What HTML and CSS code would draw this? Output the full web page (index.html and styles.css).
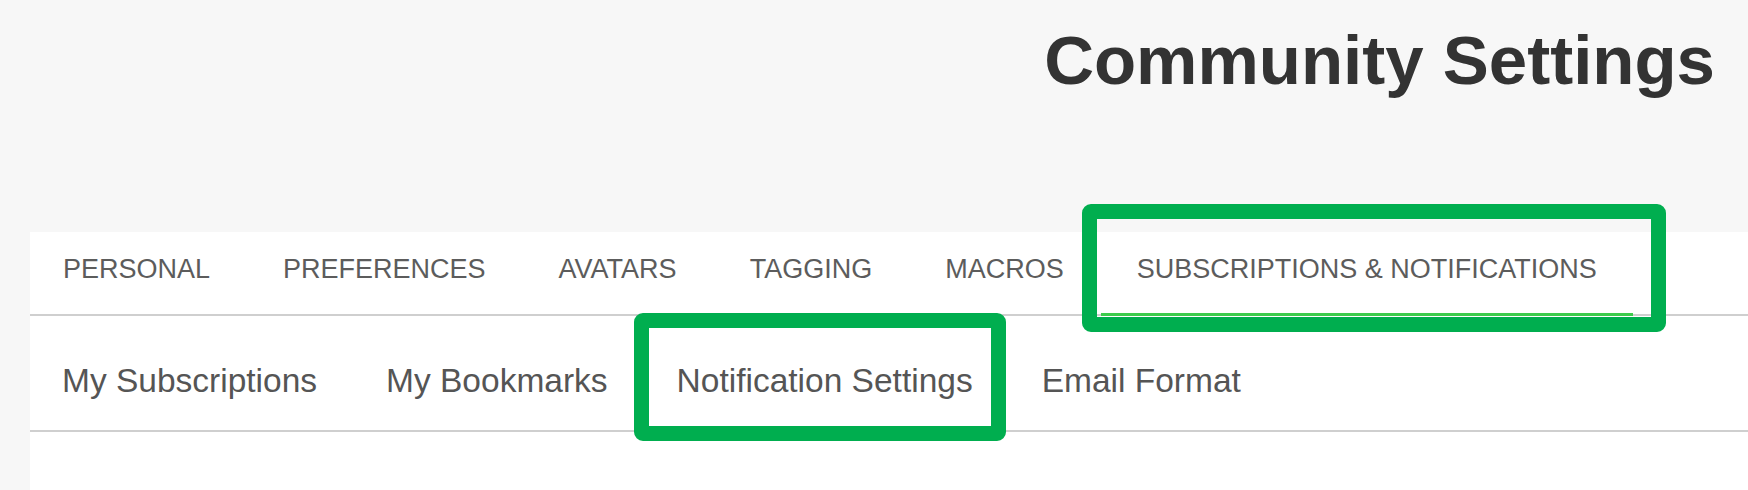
FILE: index.html
```html
<!DOCTYPE html>
<html lang="en">
<head>
    <meta charset="UTF-8">
    <meta name="viewport" content="width=device-width, initial-scale=1.0">
    <title>Community Settings</title>
    <link rel="stylesheet" href="styles.css">
</head>
<body>
    <div class="page">
        <header class="page-header">
            <h1>Community Settings</h1>
        </header>

        <div class="settings-panel">
            <nav class="tabs">
                <a href="#" class="tab">PERSONAL</a>
                <a href="#" class="tab">PREFERENCES</a>
                <a href="#" class="tab">AVATARS</a>
                <a href="#" class="tab">TAGGING</a>
                <a href="#" class="tab">MACROS</a>
                <a href="#" class="tab active">SUBSCRIPTIONS &amp; NOTIFICATIONS</a>
            </nav>
            <nav class="subtabs">
                <a href="#" class="subtab">My Subscriptions</a>
                <a href="#" class="subtab">My Bookmarks</a>
                <a href="#" class="subtab">Notification Settings</a>
                <a href="#" class="subtab">Email Format</a>
            </nav>
        </div>

        <!-- annotation boxes drawn over the screenshot -->
        <div class="highlight highlight-tab"></div>
        <div class="highlight highlight-subtab"></div>
    </div>
</body>
</html>
```

FILE: styles.css
```css
* {
    margin: 0;
    padding: 0;
    box-sizing: border-box;
}

body {
    font-family: "Liberation Sans", Arial, sans-serif;
    background: #f7f7f7;
    color: #333;
    width: 1748px;
    height: 490px;
    overflow: hidden;
}

.page {
    position: relative;
    height: 490px;
    display: flex;
    flex-direction: column;
}

.page-header {
    height: 232px;
    padding: 21px 33px 0 0;
    text-align: right;
}

.page-header h1 {
    font-size: 69px;
    line-height: 79px;
    font-weight: bold;
    color: #333;
}

.settings-panel {
    flex: 1;
    margin-left: 30px;
    background: white;
}

.tabs {
    display: flex;
    gap: 1px;
    border-bottom: 2px solid #cfcfcf;
}

.tab {
    display: block;
    padding: 22px 36px 29px 36px;
    font-size: 27px;
    line-height: 31px;
    color: #5c5c5c;
    text-decoration: none;
}

.tab:first-child {
    padding-left: 33px;
}

.tab.active {
    border-bottom: 3px solid #3ccb4c;
    margin-bottom: -2px;
    padding-bottom: 28px;
}

.subtabs {
    display: flex;
    border-bottom: 2px solid #cfcfcf;
}

.subtab {
    display: block;
    padding: 46px 34.5px 30px 34.5px;
    font-size: 33.5px;
    line-height: 38px;
    color: #555;
    text-decoration: none;
}

.subtab:first-child {
    padding-left: 32px;
}

.highlight {
    position: absolute;
    border: 15px solid #00ae4f;
    border-radius: 9px;
}

.highlight-tab {
    left: 1082px;
    top: 204px;
    width: 584px;
    height: 128px;
}

.highlight-subtab {
    left: 634px;
    top: 313px;
    width: 372px;
    height: 128px;
}
```
